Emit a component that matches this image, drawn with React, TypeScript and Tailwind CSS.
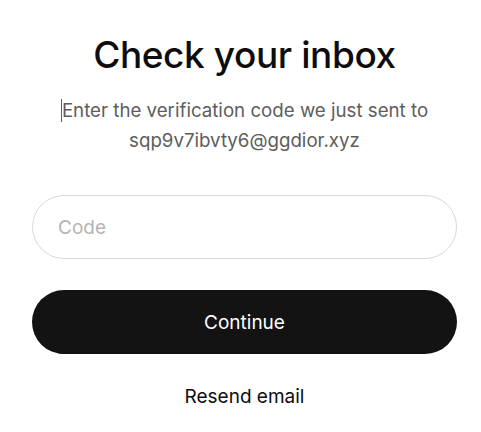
import React from "react";

export default function App() {
  return (
    <div
      className="min-h-[432px] w-[481px] bg-white pl-[32px] pr-[24px] pt-[30px]"
      style={{ fontFamily: "Inter, 'Noto Sans', sans-serif" }}
    >
      <h1 className="text-center text-[37px] leading-[50px] font-medium tracking-[-0.4px] text-[#0d0d0d]">
        Check your inbox
      </h1>
      <p className="mt-[16px] text-center text-[18.7px] leading-[30px] text-[#5d5d5d]">
        <span className="border-l border-[#5d5d5d]">Enter the verification code we just sent to</span>
        <br />
        sqp9v7ibvty6@ggdior.xyz
      </p>
      <input
        placeholder="Code"
        className="mt-[39px] block h-[64px] w-full rounded-full border border-[#d9d9d9] px-[25px] text-[19px] text-[#0d0d0d] outline-none placeholder:text-[#b4b4b4]"
      />
      <button className="mt-[31px] block h-[64px] w-full rounded-full bg-[#131313] pt-[2px] text-[19px] font-normal text-white">
        Continue
      </button>
      <div className="mt-[28px] text-center text-[19px] leading-[30px] text-[#0d0d0d]">
        Resend email
      </div>
    </div>
  );
}
